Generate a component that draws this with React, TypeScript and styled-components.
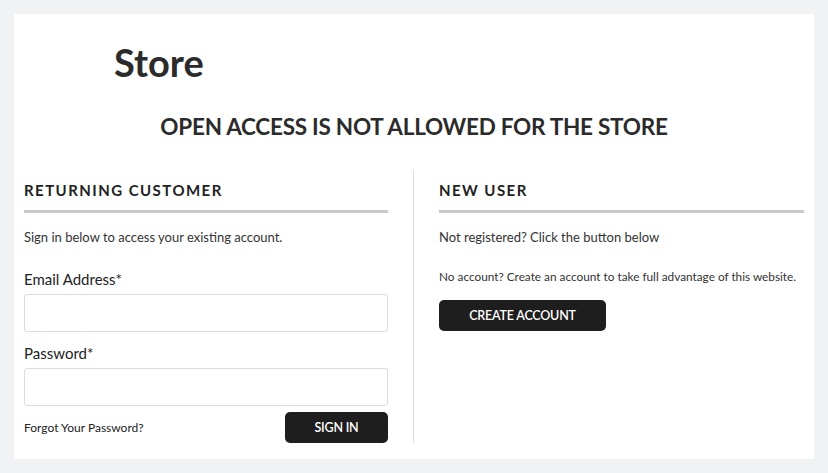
import React from "react";
import styled, { createGlobalStyle } from "styled-components";

const GlobalStyle = createGlobalStyle`
  html, body {
    margin: 0;
    padding: 0;
    background: #f1f2f4;
  }
  body {
    font-family: Lato, "Open Sans", "Liberation Sans", sans-serif;
    color: #222;
  }
  * {
    box-sizing: border-box;
  }
`;

const Page = styled.div`
  padding: 14px;
  width: 828px;
  height: 473px;
`;

const Card = styled.div`
  background: #fff;
  width: 800px;
  height: 445px;
  padding: 0 10px 17px;
`;

const Brand = styled.div`
  padding: 25.5px 0 0 90px;
  font-size: 38px;
  line-height: 1.2;
  font-weight: 700;
  color: #2b2b2b;
`;

const Notice = styled.h1`
  margin: 28px 0 0;
  text-align: center;
  font-size: 22.5px;
  line-height: 1.2;
  font-weight: 700;
  letter-spacing: -0.25px;
  color: #2b2b2b;
`;

const Columns = styled.div`
  display: grid;
  grid-template-columns: 389px 1fr;
  margin-top: 30px;
`;

const Column = styled.section<{ $side: "left" | "right" }>`
  padding-top: 11px;
  ${(p) =>
    p.$side === "left"
      ? "padding-right: 25px;"
      : "padding-left: 25px; border-left: 1px solid #dedede;"}
`;

const SectionTitle = styled.h2`
  margin: 0;
  padding-bottom: 11px;
  border-bottom: 3px solid #c9c9c9;
  font-size: 15px;
  line-height: 18px;
  font-weight: 700;
  letter-spacing: 1.45px;
  color: #222;
`;

const Intro = styled.p`
  margin: 17px 0 0;
  font-size: 13px;
  line-height: 15.6px;
  color: #333;
`;

const Small = styled.p`
  margin: 24px 0 0;
  font-size: 11.8px;
  line-height: 14px;
  color: #333;
`;

const Label = styled.label<{ $first?: boolean }>`
  display: block;
  margin-top: ${(p) => (p.$first ? "24px" : "12px")};
  font-size: 15px;
  line-height: 18px;
  color: #222;
`;

const Input = styled.input`
  display: block;
  width: 100%;
  height: 38px;
  margin-top: 6px;
  border: 1px solid #dcdcdc;
  border-radius: 3px;
  background: #fff;
  font: inherit;
  padding: 0 10px;
  outline: none;
`;

const Actions = styled.div`
  display: flex;
  justify-content: space-between;
  align-items: center;
  margin-top: 6px;
`;

const Forgot = styled.a`
  font-size: 12px;
  color: #222;
  text-decoration: none;
`;

const DarkButton = styled.button<{ $width: number }>`
  width: ${(p) => p.$width}px;
  height: 31px;
  border: none;
  border-radius: 5px;
  background: #1f1e1e;
  color: #fff;
  font-family: Lato, "Liberation Sans", sans-serif;
  font-size: 12.5px;
  font-weight: 600;
  letter-spacing: -0.2px;
  cursor: pointer;
`;

const CreateWrap = styled.div`
  margin-top: 16px;
`;

export default function App() {
  return (
    <>
      <GlobalStyle />
      <Page>
        <Card>
          <Brand>Store</Brand>
          <Notice>OPEN ACCESS IS NOT ALLOWED FOR THE STORE</Notice>
          <Columns>
            <Column $side="left">
              <SectionTitle>RETURNING CUSTOMER</SectionTitle>
              <Intro>Sign in below to access your existing account.</Intro>
              <Label $first htmlFor="email">Email Address*</Label>
              <Input id="email" type="email" />
              <Label htmlFor="password">Password*</Label>
              <Input id="password" type="password" />
              <Actions>
                <Forgot href="#">Forgot Your Password?</Forgot>
                <DarkButton $width={103}>SIGN IN</DarkButton>
              </Actions>
            </Column>
            <Column $side="right">
              <SectionTitle>NEW USER</SectionTitle>
              <Intro>Not registered? Click the button below</Intro>
              <Small>No account? Create an account to take full advantage of this website.</Small>
              <CreateWrap>
                <DarkButton $width={167}>CREATE ACCOUNT</DarkButton>
              </CreateWrap>
            </Column>
          </Columns>
        </Card>
      </Page>
    </>
  );
}
